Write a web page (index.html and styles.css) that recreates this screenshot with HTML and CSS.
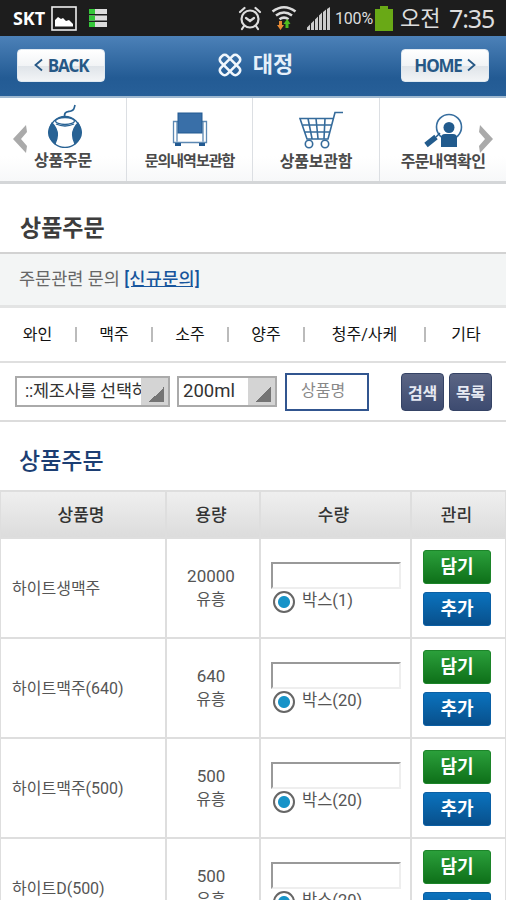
FILE: index.html
```html
<!DOCTYPE html>
<html lang="ko">
<head>
    <meta charset="UTF-8">
    <meta name="viewport" content="width=device-width, initial-scale=1.0">
    <title>상품주문</title>
    <link rel="stylesheet" href="styles.css">
</head>
<body>
    <div class="status-bar">
        <span class="carrier">SKT</span>
        <svg class="icon-photo" width="26" height="25" viewBox="0 0 26 25">
            <rect x="1" y="1" width="24" height="23" fill="#1d1d1d" stroke="#eee" stroke-width="1.6"/>
            <path d="M4 20.500V14l3-3 3 2 2-1 3 3 3-1 4 4v2.500z" fill="#fff"/>
        </svg>
        <svg class="icon-list" width="18" height="18" viewBox="0 0 18 18">
            <path d="M0 0h18v5H0zM0 6.500h18v5H0zM0 13h18v5H0z" fill="#dcdcdc"/>
            <path d="M0 0h6v5H0zM0 6.500h6v5H0zM0 13h6v5H0z" fill="#35c83a"/>
        </svg>
        <svg class="icon-alarm" width="24" height="26" viewBox="0 0 24 26" fill="none" stroke="#ddd" stroke-width="2.200" stroke-linecap="round">
            <circle cx="12" cy="14" r="8.500"/>
            <path d="M8 13l4 3 4-3M2 7l4.500-4M22 7l-4.500-4M6 21l-2 3M18 21l2 3"/>
        </svg>
        <svg class="icon-wifi" width="26" height="26" viewBox="0 0 26 26" fill="none">
            <path d="M1.500 6.500q11.500-8.500 23 0M5 10.500q8-6 16 0M8.500 14.300q4.500-3.500 9 0" stroke="#ddd" stroke-width="2.600"/>
            <path d="M8 16h3v4h2l-3.500 5L6 20h2z" fill="#e88a34"/>
            <path d="M14.500 23v-4h-2l3.700-5 3.300 5h-2v4z" fill="#4fbb20"/>
        </svg>
        <svg class="icon-signal" width="23" height="23" viewBox="0 0 23 23" fill="#ccc">
            <path d="M0 23v-2.500l3-3V23zM4 23v-6.500l3-3V23zM8 23V12.500l3-3V23zM12 23V8.500l3-3V23zM16 23V5l3-2.500V23zM20 23V2l3-2v23z"/>
        </svg>
        <span class="percent">100%</span>
        <svg class="icon-battery" width="18" height="25" viewBox="0 0 18 25">
            <path d="M0 3h5V0h8v3h5v22H0z" fill="#69a916"/>
        </svg>
        <span class="ampm">오전</span>
        <span class="clock">7:35</span>
    </div>

    <header class="header">
        <button class="header-btn"><svg width="9" height="14" viewBox="0 0 9 14"><path d="M8 1.500L1.500 7 8 12.500" fill="none" stroke="#265886" stroke-width="1.800"/></svg><span>BACK</span></button>
        <div class="logo">
            <svg width="26" height="26" viewBox="0 0 26 26" fill="none" stroke="#f0f6fc" stroke-width="2.600">
                <rect x="-4.500" y="-12" width="9" height="24" rx="3.500" transform="translate(13 13) rotate(45)"/>
                <rect x="-4.500" y="-12" width="9" height="24" rx="3.500" transform="translate(13 13) rotate(-45)"/>
            </svg>
            <span>대정</span>
        </div>
        <button class="header-btn"><span>HOME</span><svg width="9" height="14" viewBox="0 0 9 14"><path d="M1 1.500L7.500 7 1 12.500" fill="none" stroke="#265886" stroke-width="1.800"/></svg></button>
    </header>

    <nav class="menu">
        <a class="menu-item first">
            <svg width="36" height="44" viewBox="0 0 36 44" fill="none" stroke="#286294" stroke-width="1.300">
                <path d="M18 14c-2-7 3-6 6-7s3-2 4-6" stroke-width="1.700"/>
                <circle cx="18" cy="28" r="15.500" fill="#fff"/>
                <path d="M5 19q9 9 3 21Q-3 31 5 19zM31 19q-9 9-3 21 11-9 3-21z" fill="#286294"/>
                <ellipse cx="18" cy="17" rx="9.500" ry="3.500" fill="#fff"/>
                <path d="M9 20q9 4 18 0"/>
            </svg>
            <span>상품주문</span>
        </a>
        <a class="menu-item second">
            <svg width="36" height="36" viewBox="0 0 36 36">
                <path d="M1.500 9.500h33v21h-33zM5 9.500v20M31 9.500v20" fill="#fff" stroke="#5d89b3" stroke-width="1.300"/>
                <rect x="6" y="1" width="24" height="20" fill="#396fa8" stroke="#225a91"/>
                <path d="M3 31h6v3H3zM27 31h6v3h-6z" fill="#225a91"/>
            </svg>
            <span>문의내역보관함</span>
        </a>
        <a class="menu-item third">
            <svg width="46" height="38" viewBox="0 0 46 38" fill="none" stroke="#356b9b" stroke-width="1.600">
                <path d="M45 1.500h-8L30 28H9L2 7.500h34M5 14h29M7 21h25M10 7.500l4 20M18 7.500l2 20M27 7.500l-1 20"/>
                <circle cx="11" cy="33" r="3.700"/>
                <circle cx="27" cy="33" r="3.700"/>
            </svg>
            <span>상품보관함</span>
        </a>
        <a class="menu-item fourth">
            <svg width="40" height="36" viewBox="0 0 40 36">
                <circle cx="26" cy="14" r="12.500" fill="#fff" stroke="#376e9f" stroke-width="1.600"/>
                <circle cx="26" cy="14.500" r="5.500" fill="#225b8d"/>
                <path d="M18 34V25q0-4 4-4h8q4 0 4 4v9z" fill="#225b8d"/>
                <path d="M3 32l10-8" stroke="#225b8d" stroke-width="5.500"/>
                <path d="M13 24l4-4" stroke="#225b8d" stroke-width="1.500"/>
            </svg>
            <span>주문내역확인</span>
        </a>
        <svg class="arrow arrow-left" width="15" height="28" viewBox="0 0 15 28"><path d="M0 14L13 0l1 7-6 7 6 7-1 7z" fill="#aaa"/></svg>
        <svg class="arrow arrow-right" width="15" height="28" viewBox="0 0 15 28"><path d="M15 14L2 0 1 7l6 7-6 7 1 7z" fill="#aaa"/></svg>
    </nav>

    <h1 class="page-title">상품주문</h1>

    <div class="notice">주문관련 문의 <a href="#">[신규문의]</a></div>

    <ul class="categories">
        <li>와인</li>
        <li>맥주</li>
        <li>소주</li>
        <li>양주</li>
        <li>청주/사케</li>
        <li>기타</li>
    </ul>

    <form class="filters">
        <div class="select maker"><span>::제조사를 선택하</span><i></i></div>
        <div class="select size"><span>200ml</span><i></i></div>
        <input class="keyword" type="text" placeholder="상품명">
        <button class="dark-btn" type="button">검색</button>
        <button class="dark-btn" type="button">목록</button>
    </form>

    <h2 class="section-title">상품주문</h2>

    <table class="products">
        <thead>
            <tr>
                <th class="col-name">상품명</th>
                <th class="col-size">용량</th>
                <th class="col-qty">수량</th>
                <th class="col-manage">관리</th>
            </tr>
        </thead>
        <tbody>
            <tr>
                <td class="name">하이트생맥주</td>
                <td class="volume"><b>20000</b>유흥</td>
                <td class="qty">
                    <input type="text">
                    <label><i class="radio"></i>박스(1)</label>
                </td>
                <td class="manage">
                    <button class="green">담기</button>
                    <button class="blue">추가</button>
                </td>
            </tr>
            <tr>
                <td class="name">하이트맥주(640)</td>
                <td class="volume"><b>640</b>유흥</td>
                <td class="qty">
                    <input type="text">
                    <label><i class="radio"></i>박스(20)</label>
                </td>
                <td class="manage">
                    <button class="green">담기</button>
                    <button class="blue">추가</button>
                </td>
            </tr>
            <tr>
                <td class="name">하이트맥주(500)</td>
                <td class="volume"><b>500</b>유흥</td>
                <td class="qty">
                    <input type="text">
                    <label><i class="radio"></i>박스(20)</label>
                </td>
                <td class="manage">
                    <button class="green">담기</button>
                    <button class="blue">추가</button>
                </td>
            </tr>
            <tr>
                <td class="name">하이트D(500)</td>
                <td class="volume"><b>500</b>유흥</td>
                <td class="qty">
                    <input type="text">
                    <label><i class="radio"></i>박스(20)</label>
                </td>
                <td class="manage">
                    <button class="green">담기</button>
                    <button class="blue">추가</button>
                </td>
            </tr>
        </tbody>
    </table>
</body>
</html>
```
FILE: styles.css
```css
* {
    box-sizing: border-box;
}
body {
    margin: 0;
    height: 900px;
    overflow: hidden;
    background-color: #fff;
    color: #555;
    font-family: Roboto, "Noto Sans CJK KR", sans-serif;
    font-size: 16px;
}
button {
    font-family: inherit;
    padding: 0;
    cursor: pointer;
}
svg {
    display: block;
    flex: none;
}

/* status bar */
.status-bar {
    display: flex;
    align-items: center;
    height: 36px;
    padding-left: 13px;
    background-color: #1d1d1d;
    color: #ddd;
    white-space: nowrap;
}
.carrier {
    width: 38px;
    color: #fff;
    font: bold 18px "Open Sans", sans-serif;
    letter-spacing: -0.1px;
}
.icon-list {
    margin-left: 12px;
}
.icon-alarm {
    margin-left: 131px;
}
.icon-wifi {
    margin-left: 9px;
}
.icon-signal {
    margin-left: 10px;
}
.percent {
    width: 40px;
    margin-left: 5px;
    font-size: 16px;
    letter-spacing: -0.2px;
}
.ampm {
    width: 49px;
    margin-left: 7px;
    padding-top: 2px;
    font-size: 22px;
    line-height: 34px;
}
.clock {
    font: 25px "Noto Sans", sans-serif;
    letter-spacing: -1.1px;
}

/* header */
.header {
    display: flex;
    align-items: center;
    justify-content: space-between;
    height: 60px;
    padding: 0 17px 2px;
    background: linear-gradient(#4c81b8, #235b94 70%, #275f98);
}
.header-btn {
    display: flex;
    align-items: center;
    justify-content: center;
    gap: 5px;
    width: 88px;
    height: 33px;
    border: 1px solid #dfe8f0;
    border-radius: 4px;
    background: linear-gradient(#fff, #f2f4f6 50%, #dfe4e9 52%, #f2f4f6);
    color: #265886;
    font: bold 17px "Open Sans", sans-serif;
    letter-spacing: -1.2px;
}
.logo {
    display: flex;
    align-items: center;
    gap: 10px;
    margin-left: 4px;
    color: #e6f0fa;
    font-size: 22px;
    font-weight: bold;
    line-height: 30px;
}

/* icon menu */
.menu {
    position: relative;
    display: grid;
    grid-template-columns: 127px 126px 127px 126px;
    height: 88px;
    border-top: 2px solid #9eb8d0;
    border-bottom: 3px solid #d4d6d8;
    background: linear-gradient(#fff 70%, #f7f8f9);
}
.menu-item {
    display: flex;
    flex-direction: column;
    align-items: center;
    justify-content: flex-end;
    padding-bottom: 8px;
    border-right: 1px solid #dcdfe3;
    color: #4a4a4a;
    font-size: 16px;
    font-weight: bold;
    line-height: 24px;
    letter-spacing: -0.2px;
    white-space: nowrap;
}
.menu-item svg {
    margin-bottom: 1px;
}
.menu-item.first svg {
    margin-left: 3px;
}
.menu-item.second {
    font-size: 15px;
    letter-spacing: -1px;
}
.menu-item.third {
    padding-bottom: 7px;
}
.menu-item.third svg {
    margin-left: 9px;
}
.menu-item.fourth {
    padding-bottom: 7px;
    border-right: 0;
    letter-spacing: -0.6px;
}
.arrow {
    position: absolute;
    top: 27px;
}
.arrow-left {
    left: 13px;
}
.arrow-right {
    right: 13px;
}

.page-title {
    height: 70px;
    margin: 0;
    padding: 10px 20px 0;
    border-bottom: 2px solid #d2d2d2;
    color: #3d3d3d;
    font-size: 23px;
    line-height: 70px;
}
.notice {
    height: 54px;
    padding-left: 19px;
    border-bottom: 3px solid #e3e4e4;
    background-color: #f3f5f5;
    color: #666;
    font-size: 17.5px;
    line-height: 50px;
}
.notice a {
    color: #17559c;
    font-weight: 500;
    letter-spacing: 0.3px;
}

/* category links */
.categories {
    display: grid;
    grid-template-columns: 77px 76px 76px 76px 121px 80px;
    align-items: center;
    height: 55px;
    margin: 0;
    padding: 0 0 1px;
    border-bottom: 2px solid #dfdfdf;
    list-style: none;
    color: #111;
    font-size: 16px;
    line-height: 15px;
    text-align: center;
}
.categories li {
    border-right: 2px solid #bbb;
}
.categories li:last-child {
    border-right: 0;
}

/* search filters */
.filters {
    display: flex;
    align-items: center;
    height: 59px;
    padding-left: 15px;
    border-bottom: 2px solid #dcdcdc;
}
.select {
    display: flex;
    height: 31px;
    border: 2px solid #aaa;
    color: #333;
    font-size: 17.5px;
    line-height: 27px;
}
.select span {
    flex: 1;
    overflow: hidden;
    white-space: nowrap;
}
.select i {
    width: 27px;
    background: linear-gradient(135deg, transparent 50%, #747474 50%) 8px 9px / 15px 15px no-repeat #d4d4d4;
}
.maker {
    width: 155px;
}
.maker span {
    padding-left: 8px;
    letter-spacing: -0.3px;
}
.size {
    width: 100px;
    margin-left: 7px;
}
.size span {
    padding-left: 4px;
    font-size: 18.5px;
}
.keyword {
    width: 84px;
    height: 38px;
    margin: 0 32px 0 8px;
    padding: 0 0 2px 14px;
    border: 2px solid #31558f;
    font: 16px Roboto, "Noto Sans CJK KR", sans-serif;
}
.keyword::placeholder {
    color: #888;
}
.dark-btn {
    width: 43px;
    height: 38px;
    margin-right: 5px;
    border: 1px solid #354365;
    border-radius: 4px;
    background: linear-gradient(#5b6584, #3d4b70);
    color: #e6e9f2;
    font-size: 16px;
    font-weight: bold;
    letter-spacing: -0.3px;
}

.section-title {
    height: 68px;
    margin: 0;
    padding: 5px 19px 0;
    color: #1c3e73;
    font-size: 23px;
    font-weight: 500;
    line-height: 70px;
}

/* product table */
.products {
    width: 508px;
    margin-left: -1px;
    table-layout: fixed;
    border-collapse: collapse;
}
.products th,
.products td {
    padding: 0;
    border: 2px solid #dedede;
}
.products th {
    height: 47px;
    padding-right: 4px;
    background: linear-gradient(#efefef, #dcdcdc);
    color: #333;
    font-size: 17px;
    font-weight: 500;
    line-height: 20px;
}
.col-name {
    width: 166px;
}
.col-size {
    width: 94px;
}
.col-qty {
    width: 151px;
}
.products td {
    height: 100px;
}
.products td.name {
    padding: 0 0 2px 11px;
}
.products td.volume {
    padding-right: 4px;
    text-align: center;
    line-height: 23px;
}
.volume b {
    display: block;
    font-size: 17px;
    font-weight: normal;
}
.products td.qty {
    padding: 0 9px 2px 10px;
}
.qty input {
    display: block;
    width: 130px;
    height: 27px;
    border: 2px solid #eee;
    border-top-color: #999;
    border-left-color: #999;
}
.qty label {
    display: flex;
    align-items: center;
    gap: 7px;
    height: 24px;
    margin-left: 2px;
    line-height: 22px;
    font-size: 16.5px;
}
.radio {
    width: 22px;
    height: 22px;
    margin-top: 3px;
    border: 2px solid #666;
    border-radius: 50%;
    background: radial-gradient(circle, #1793c8 5.5px, #fff 6.5px);
}
.products td.manage {
    padding: 0 0 1px 11px;
}
.manage button {
    display: block;
    width: 68px;
    height: 34px;
    border-radius: 3px;
    color: #fff;
    font-size: 18px;
    font-weight: bold;
    line-height: 28px;
}
.manage .green {
    margin-bottom: 8px;
    border: 1px solid #1c8429;
    background: linear-gradient(#2b9f3b, #0e7019);
}
.manage .blue {
    border: 1px solid #0a5fa4;
    background: linear-gradient(#0b72bd, #08508c);
}
```
